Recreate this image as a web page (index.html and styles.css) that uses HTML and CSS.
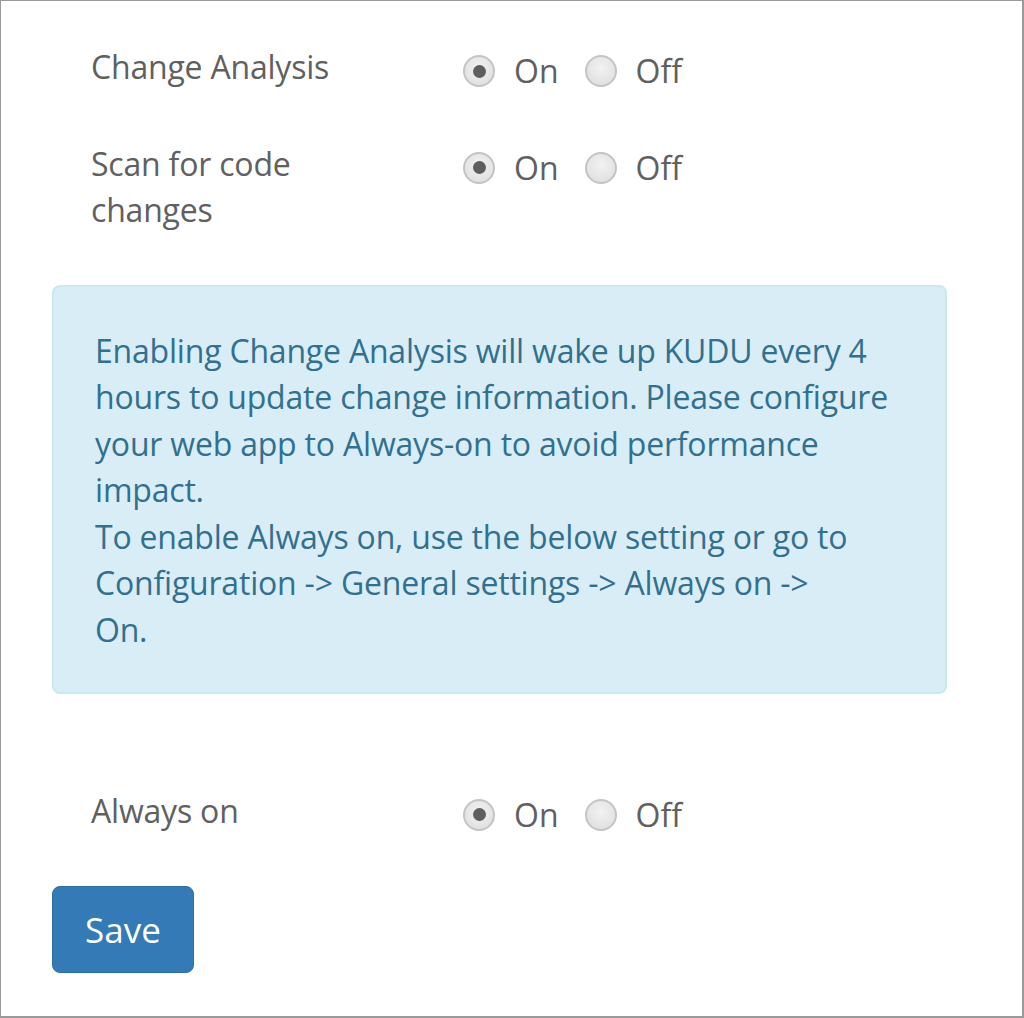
FILE: index.html
```html
<!DOCTYPE html>
<html lang="en">
<head>
<meta charset="utf-8">
<title>Change Analysis settings</title>
<link rel="stylesheet" href="styles.css">
</head>
<body>
<div class="frame">
  <form class="settings">
    <div class="row row-first">
      <div class="label">Change Analysis</div>
      <div class="options">
        <label class="opt"><span class="radio checked"></span><span class="opt-text">On</span></label>
        <label class="opt"><span class="radio"></span><span class="opt-text">Off</span></label>
      </div>
    </div>
    <div class="row row-gap">
      <div class="label">Scan for code<br>changes</div>
      <div class="options">
        <label class="opt"><span class="radio checked"></span><span class="opt-text">On</span></label>
        <label class="opt"><span class="radio"></span><span class="opt-text">Off</span></label>
      </div>
    </div>
    <div class="info">
      Enabling Change Analysis will wake up KUDU every 4<br>
      hours to update change information. Please configure<br>
      your web app to Always-on to avoid performance<br>
      impact.<br>
      To enable Always on, use the below setting or go to<br>
      Configuration -&gt; General settings -&gt; Always on -&gt;<br>
      On.
    </div>
    <div class="row row-always">
      <div class="label">Always on</div>
      <div class="options">
        <label class="opt"><span class="radio checked"></span><span class="opt-text">On</span></label>
        <label class="opt"><span class="radio"></span><span class="opt-text">Off</span></label>
      </div>
    </div>
    <div class="actions">
      <button type="button" class="btn-save">Save</button>
    </div>
  </form>
</div>
</body>
</html>
```

FILE: styles.css
```css
html, body {
  margin: 0;
  padding: 0;
  background: #ffffff;
}

.frame {
  box-sizing: border-box;
  width: 1024px;
  height: 1018px;
  border: 1px solid #9a9a9a;
  border-right-width: 2px;
  border-bottom-width: 2px;
  font-family: "Open Sans", "Noto Sans", sans-serif;
  font-size: 32px;
  line-height: 46.5px;
  color: #606060;
}

.settings {
  display: flex;
  flex-direction: column;
  padding: 43px 0 0 51px;
  width: 895px;
}

.row {
  display: flex;
  align-items: flex-start;
}

.row-gap {
  margin-top: 50px;
}

.row-always {
  margin-top: 94px;
}

.label {
  width: 411px;
  padding-left: 39px;
  box-sizing: border-box;
  flex: none;
  letter-spacing: -0.2px;
}

.options {
  display: flex;
  align-items: center;
  gap: 26px;
  margin-top: 4px;
  margin-bottom: -4px;
}

.opt {
  display: flex;
  align-items: center;
  gap: 19px;
}

.radio {
  box-sizing: border-box;
  width: 32px;
  height: 32px;
  border-radius: 50%;
  border: 2px solid #c4c4c4;
  background: radial-gradient(circle at 50% 40%, #f2f2f2 0%, #dcdcdc 100%);
  display: flex;
  align-items: center;
  justify-content: center;
}

.radio.checked::after {
  content: "";
  width: 13px;
  height: 13px;
  border-radius: 50%;
  background: #5e5e5e;
}

.opt-text {
  color: #606060;
}

.info {
  margin-top: 51px;
  box-sizing: border-box;
  height: 409px;
  padding: 41px 30px 0 41px;
  background: #d9edf7;
  border: 2px solid #c9e8f0;
  border-radius: 8px;
  color: #31708f;
  letter-spacing: -0.2px;
}

.actions {
  margin-top: 52px;
}

.btn-save {
  width: 142px;
  height: 87px;
  border: 1px solid #2e6da4;
  border-radius: 8px;
  background: #337ab7;
  color: #ffffff;
  font-family: "Open Sans", "Noto Sans", sans-serif;
  font-size: 35px;
  padding: 0;
}
```
